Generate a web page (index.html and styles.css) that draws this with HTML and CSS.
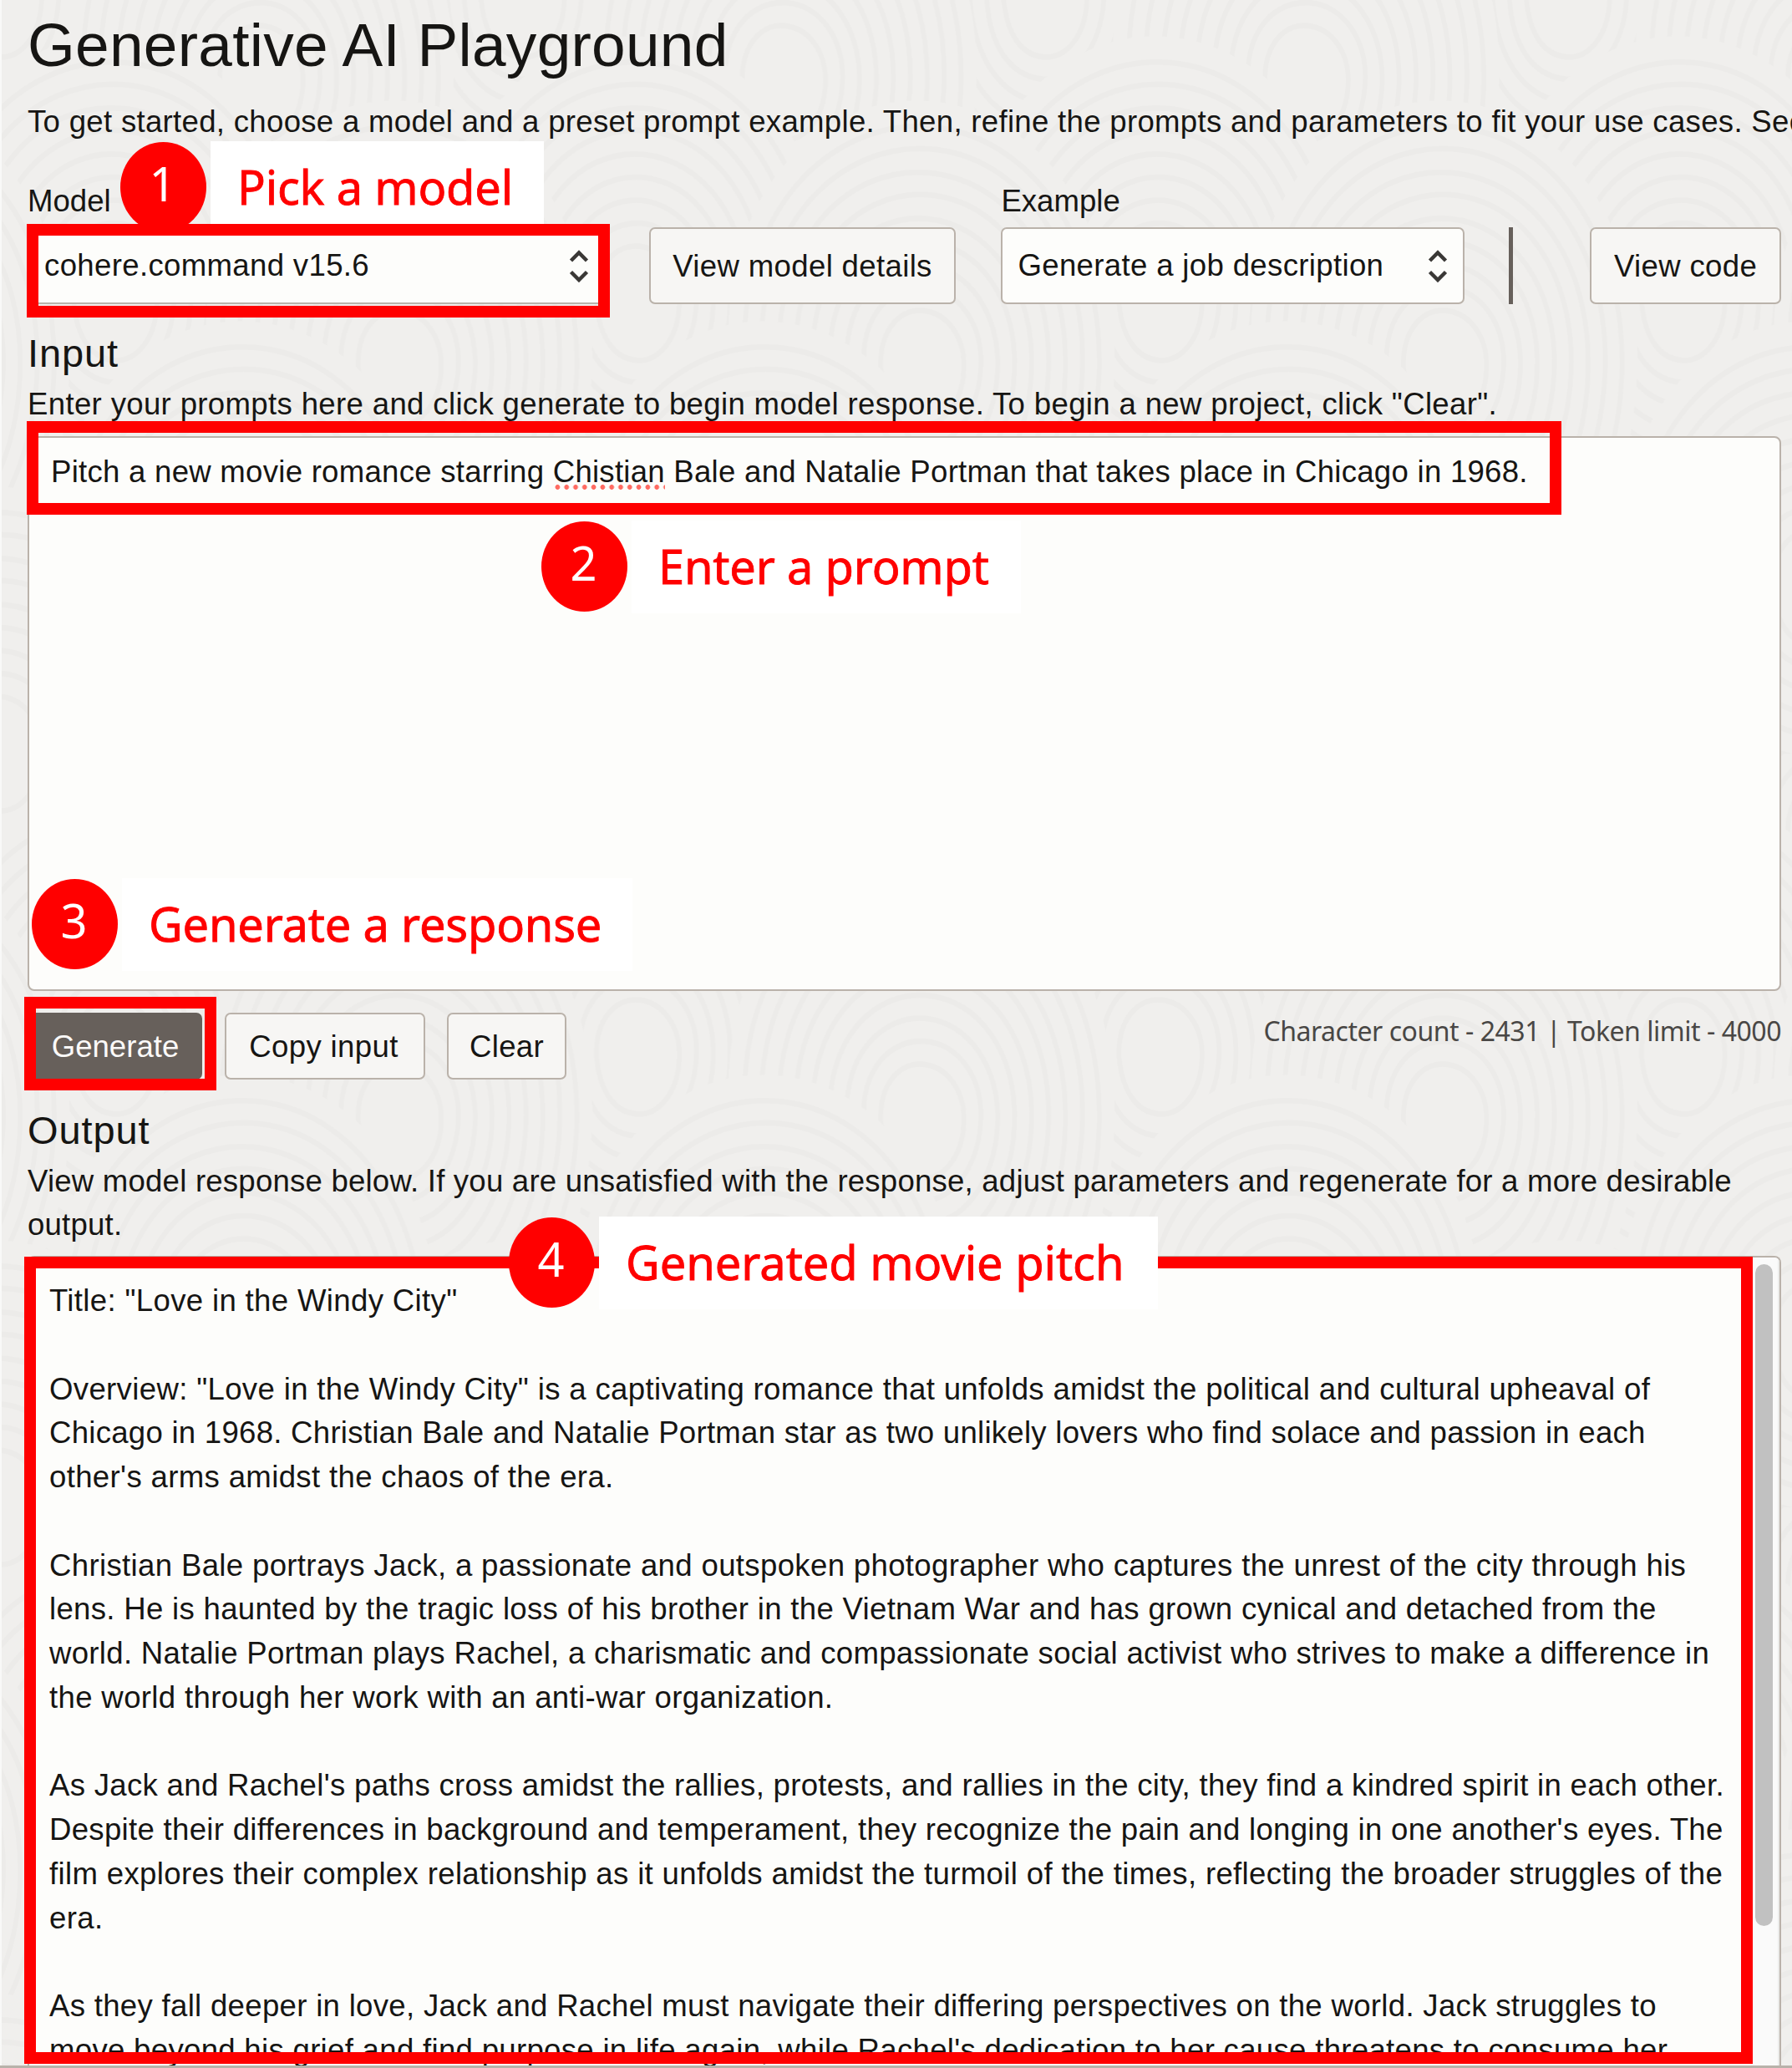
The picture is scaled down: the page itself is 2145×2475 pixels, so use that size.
FILE: index.html
```html
<!DOCTYPE html>
<html lang="en">
<head>
<meta charset="utf-8">
<title>Generative AI Playground</title>
<link rel="stylesheet" href="styles.css">
</head>
<body>
<svg class="backdrop" aria-hidden="true">
  <defs>
    <g id="rings">
      <path class="land" d="M-250 0C-270-190-130-300 10-290S260-160 250 10 130 300-10 285-235 170-250 0Z"/>
      <path d="M-230 0C-245-170-120-270 10-262S238-140 230 10 118 272-10 258-216 150-230 0Z"/>
      <path d="M-208 0C-222-155-108-245 10-238S216-128 208 8 108 246-10 234-194 138-208 0Z"/>
      <path d="M-186 0C-196-138-98-220 8-212S192-116 186 8 98 220-8 210-174 124-186 0Z"/>
      <path d="M-164 0C-174-120-86-194 8-188S170-102 164 6 86 194-8 186-154 108-164 0Z"/>
      <path d="M-142 0C-150-106-74-168 6-162S148-88 142 6 74 168-6 160-132 94-142 0Z"/>
      <path d="M-120 0C-126-90-62-142 6-137S124-74 120 4 62 142-6 136-112 78-120 0Z"/>
      <path d="M-98 0C-104-74-50-116 4-112S102-60 98 4 50 116-4 111-92 64-98 0Z"/>
      <path d="M-76 0C-80-58-40-90 4-87S80-46 76 2 38 90-4 86-72 50-76 0Z"/>
      <path d="M-54 0C-56-42-28-65 2-62S56-34 54 2 28 64-2 62-50 36-54 0Z"/>
    </g>
    <pattern id="contours" width="680" height="820" patternUnits="userSpaceOnUse" patternTransform="scale(.92 1.1)">
      <use href="#rings" x="0" y="0"/><use href="#rings" x="680" y="0"/>
      <use href="#rings" x="340" y="90"/>
      <use href="#rings" x="150" y="330"/><use href="#rings" x="830" y="330"/>
      <use href="#rings" x="520" y="400"/><use href="#rings" x="-160" y="400"/>
      <use href="#rings" x="320" y="640"/>
      <use href="#rings" x="0" y="820"/><use href="#rings" x="680" y="820"/>
    </pattern>
  </defs>
  <rect width="100%" height="100%" fill="url(#contours)"/>
</svg>

<main class="page">
  <h1 class="title">Generative AI Playground</h1>
  <p class="intro">To get started, choose a model and a preset prompt example. Then, refine the prompts and parameters to fit your use cases. See</p>

  <div class="controls">
    <div class="field field-model">
      <span class="field-label">Model</span>
      <div class="select"><span>cohere.command v15.6</span>
        <svg class="chevrons" viewBox="0 0 24 40"><path d="M2.500 14 12 4.500l9.500 9.500M2.500 27.500l9.500 9.500 9.500-9.500"/></svg>
      </div>
    </div>
    <button class="btn btn-tall btn-details">View model details</button>
    <div class="field field-example">
      <span class="field-label">Example</span>
      <div class="select"><span>Generate a job description</span>
        <svg class="chevrons" viewBox="0 0 24 40"><path d="M2.500 14 12 4.500l9.500 9.500M2.500 27.500l9.500 9.500 9.500-9.500"/></svg>
      </div>
    </div>
    <div class="divider"></div>
    <button class="btn btn-tall btn-code">View code</button>
  </div>

  <h2 class="heading">Input</h2>
  <p class="hint hint-input">Enter your prompts here and click generate to begin model response. To begin a new project, click "Clear".</p>
  <div class="prompt">Pitch a new movie romance starring <span class="misspelled">Chistian</span> Bale and Natalie Portman that takes place in Chicago in 1968.</div>

  <div class="actions">
    <button class="btn btn-primary">Generate</button>
    <button class="btn btn-copy">Copy input</button>
    <button class="btn btn-clear">Clear</button>
    <span class="counter">Character count - 2431 | Token limit - 4000</span>
  </div>

  <h2 class="heading">Output</h2>
  <p class="hint hint-output">View model response below. If you are unsatisfied with the response, adjust parameters and regenerate for a more desirable<br>output.</p>

  <div class="output">
    <div class="response">
      <p>Title: "Love in the Windy City"</p>
      <p>Overview: "Love in the Windy City" is a captivating romance that unfolds amidst the political and cultural upheaval of<br><span class="tight">Chicago in 1968. Christian Bale and Natalie Portman star as two unlikely lovers who find solace and passion in each</span><br>other's arms amidst the chaos of the era.</p>
      <p>Christian Bale portrays Jack, a passionate and outspoken photographer who captures the unrest of the city through his<br><span class="snug">lens. He is haunted by the tragic loss of his brother in the Vietnam War and has grown cynical and detached from the<br>world. Natalie Portman plays Rachel, a charismatic and compassionate social activist who strives to make a difference in</span><br>the world through her work with an anti-war organization.</p>
      <p><span class="snug">As Jack and Rachel's paths cross amidst the rallies, protests, and rallies in the city, they find a kindred spirit in each other.<br>Despite their differences in background and temperament, they recognize the pain and longing in one another's eyes. The</span><br>film explores their complex relationship as it unfolds amidst the turmoil of the times, reflecting the broader struggles of the<br>era.</p>
      <p class="snug">As they fall deeper in love, Jack and Rachel must navigate their differing perspectives on the world. Jack struggles to<br>move beyond his grief and find purpose in life again, while Rachel's dedication to her cause threatens to consume her</p>
    </div>
    <div class="scrollbar"><div class="thumb"></div></div>
  </div>
</main>
<div class="page-end"></div>

<div class="callout callout-1"><span class="badge">1</span><span class="note">Pick a model</span></div>
<div class="frame frame-1"></div>
<div class="frame frame-2"></div>
<div class="callout callout-2"><span class="badge">2</span><span class="note">Enter a prompt</span></div>
<div class="callout callout-3"><span class="badge">3</span><span class="note">Generate a response</span></div>
<div class="frame frame-3"></div>
<div class="frame frame-4"></div>
<div class="callout callout-4"><span class="badge">4</span><span class="note">Generated movie pitch</span></div>
</body>
</html>
```
FILE: styles.css
```css
* { box-sizing: border-box; }

body {
  position: relative;
  margin: 0;
  width: 2145px;
  height: 2475px;
  overflow: hidden;
  background: #f0efed;
  color: #161513;
  font: 36.6px/52.75px "Liberation Sans", Arial, sans-serif;
  letter-spacing: 0.34px;
}

h1, h2, p { margin: 0; font-weight: 400; }

/* faint contour lines behind the page */
.backdrop {
  position: absolute;
  inset: 0;
  width: 100%;
  height: 100%;
}
.backdrop path { fill: none; stroke: #ecebe9; stroke-width: 6; }
.backdrop .land { fill: #f0efed; stroke: none; }

.page {
  position: relative;
  display: flex;
  flex-direction: column;
  height: 2472px;
  padding: 10px 13px 0 31px;
  border-left: 2px solid #f9f9f8;
  overflow: hidden;
}

.title { font-size: 73px; line-height: 88px; letter-spacing: 0.28px; }
.intro { margin-top: 22px; white-space: nowrap; letter-spacing: 0.3px; }

.controls {
  display: flex;
  align-items: flex-end;
  margin-top: 41px;
}
.field { display: flex; flex-direction: column; gap: 5px; }
.field-model { width: 692px; }
.field-example { width: 555px; margin-left: 54px; }
.field-label { line-height: 53px; letter-spacing: 0; }
.select {
  display: flex;
  align-items: center;
  justify-content: space-between;
  height: 92px;
  padding: 0 18px;
  border: 2px solid #bab2aa;
  border-radius: 7px;
  background: #fdfdfb;
}
.select span { padding-top: 2px; }
.chevrons { width: 24px; height: 40px; fill: none; stroke: #3a3836; stroke-width: 4.5; }

.btn {
  height: 80px;
  padding: 3px 0 0;
  border: 2px solid #bab2aa;
  border-radius: 7px;
  background: #f7f6f4;
  color: inherit;
  font: inherit;
  letter-spacing: inherit;
}
.btn-tall { height: 92px; }
.btn-details { width: 368px; margin-left: 52px; }
.btn-code { width: 229px; margin-left: 92px; }
.divider { width: 5px; height: 92px; margin-left: 53px; background: #67605b; }

.heading { font-size: 47px; line-height: 58px; letter-spacing: 0.9px; margin: 30px 0 6px; }
.hint { white-space: nowrap; }
.hint-output { letter-spacing: 0.21px; }

.prompt {
  height: 664px;
  margin-top: 11px;
  padding: 15px 26px;
  border: 2px solid #bab2aa;
  border-radius: 8px;
  background: #fdfdfb;
  letter-spacing: 0.26px;
}
.misspelled {
  padding-bottom: 1px;
  background: radial-gradient(circle, #ff6b62 2.6px, transparent 3.2px) 0 100% / 10.8px 6px repeat-x;
}

.actions { display: flex; margin-top: 26px; height: 80px; }
.btn-primary { width: 209px; padding-left: 1px; border-color: #67605b; background: #67605b; color: #fbf9f8; letter-spacing: 0; }
.btn-copy { width: 240px; margin-left: 27px; padding-right: 3px; }
.btn-clear { width: 143px; margin-left: 26px; }
.counter {
  margin-left: auto;
  padding-top: 2px;
  color: #494745;
  font: 32px/40px "Noto Sans", sans-serif;
  letter-spacing: -0.47px;
}
.actions + .heading { margin-top: 32px; }

.output {
  display: flex;
  flex: 1;
  margin-top: 10px;
  border: solid #bab2aa;
  border-width: 2px 2px 0;
  border-radius: 8px 8px 0 0;
  background: #fdfdfb;
  overflow: hidden;
}
.response { flex: 1; padding: 26px 0 0 24px; white-space: nowrap; }
.response p + p { margin-top: 52.75px; }
.snug { letter-spacing: 0.3px; }
.tight { letter-spacing: 0.26px; }
.scrollbar {
  width: 34px;
  padding: 8px 0 0 5px;
  border-right: 2px solid #ececeb;
  background: #fafafa;
}
.thumb { width: 21px; height: 792px; border-radius: 11px; background: #c1c1c1; }
.page-end { position: relative; height: 3px; background: #b8b2aa; }

/* numbered annotations laid over the page */
.frame { position: absolute; border: 14px solid #f00; }
.frame-1 { left: 32px; top: 268px; width: 698px; height: 112px; }
.frame-2 { left: 32px; top: 504px; width: 1837px; height: 112px; }
.frame-3 { left: 29px; top: 1193px; width: 230px; height: 112px; }
.frame-4 { left: 29px; top: 1504px; width: 2069px; height: 966px; }

.callout {
  position: absolute;
  display: flex;
  align-items: flex-start;
  gap: 5px;
  height: 111px;
  font: 56px/109px "Noto Sans", sans-serif;
  letter-spacing: -0.2px;
  white-space: nowrap;
}
.callout-1 { left: 144px; top: 169px; }
.callout-2 { left: 648px; top: 623px; }
.callout-3 { left: 38px; top: 1051px; }
.callout-4 { left: 609px; top: 1456px; }
.badge {
  width: 103px;
  height: 108px;
  margin-top: 1px;
  padding-right: 2px;
  border-radius: 50%;
  background: #f00;
  color: #fff;
  line-height: 98px;
  text-align: center;
}
.note {
  height: 111px;
  padding: 0 0 0 32px;
  background: #fff;
  color: #f00;
  -webkit-text-stroke: 0.8px #f00;
}
.callout-1 .note { width: 399px; }
.callout-2 .note { width: 466px; }
.callout-3 .note { width: 611px; }
.callout-4 .note { width: 669px; letter-spacing: -0.05px; }
```
